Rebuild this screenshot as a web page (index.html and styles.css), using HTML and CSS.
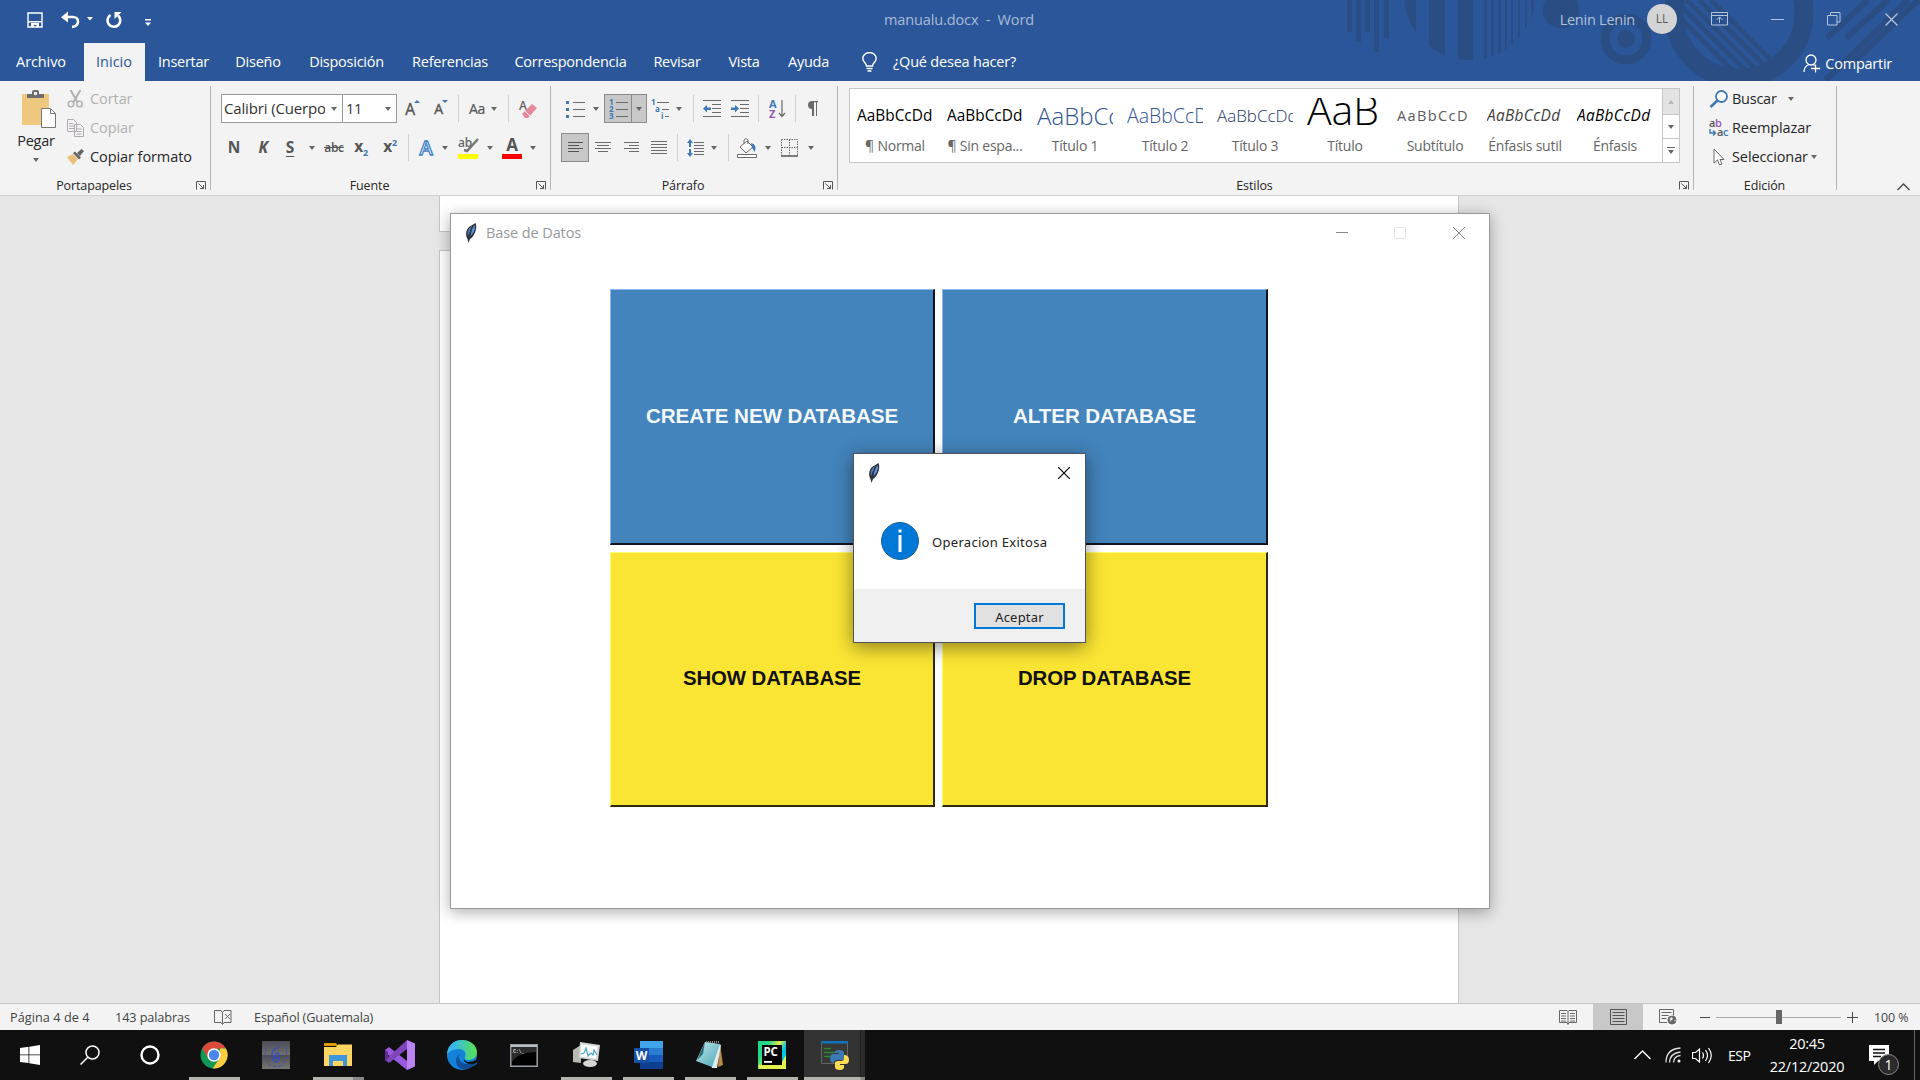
FILE: index.html
```html
<!DOCTYPE html>
<html lang="es">
<head>
<meta charset="utf-8">
<title>manualu.docx - Word</title>
<link rel="stylesheet" href="styles.css">
</head>
<body>
<div class="screen">
  <header class="top">
    <svg class="pattern" width="580" height="81" viewBox="1340 0 580 81" fill="#2a4e84">
      <defs>
        <clipPath id="disc"><circle cx="1470" cy="-6" r="66"/></clipPath>
        <clipPath id="hole"><circle cx="1739" cy="6" r="65"/></clipPath>
      </defs>
      <path d="M1347 0h5v32h-5zM1356 0h5v42h-5zM1365 0h5v32h-5zM1374 0h5v52h-5zM1384 0h5v38h-5z"/>
      <path clip-path="url(#disc)" d="M1400 0h16v70h-16zM1429 0h16v70h-16zM1458 0h15v70h-15zM1484 0h3v70h-3zM1491 0h3v70h-3zM1498 0h3v70h-3zM1505 0h2v70h-2zM1511 0h2v70h-2zM1518 0h2v70h-2zM1525 0h2v70h-2zM1531 0h3v70h-3z"/>
      <circle cx="1561" cy="10" r="18"/>
      <circle cx="1626" cy="39" r="21" fill="none" stroke="#2a4e84" stroke-width="9"/>
      <circle cx="1626" cy="39" r="9"/>
      <circle cx="1739" cy="13" r="65" fill="none" stroke="#2a4e84" stroke-width="19"/>
      <g clip-path="url(#hole)" stroke="#2a4e84" stroke-width="5">
        <path d="M1662 0l80 80M1675 0l80 80M1687 0l80 80M1699 0l80 80M1711 0l80 80" />
      </g>
      <path d="M1827 38L1868 0M1846 38L1888 0M1826 80L1908 0M1852 64L1918 0" stroke="#2a4e84" stroke-width="6"/>
    </svg>
    <div class="titlebar">
      <div class="quick">
        <svg width="16" height="16" viewBox="0 0 16 16"><path d="M1 1h14v14H1z" fill="none" stroke="#fff" stroke-width="1.400"/><path d="M1 9h14v1.500H1z" fill="#fff"/><path d="M4 11h8v4h-2.500v-2H7v2H4z" fill="#fff"/></svg>
        <svg width="20" height="18" viewBox="0 0 20 18"><path d="M3 6h9c3 0 5 2 5 4.500S15 15.500 11 16" fill="none" stroke="#fff" stroke-width="2.600"/><path d="M0 6.200L7 .5v11z" fill="#fff"/></svg>
        <svg class="dd" width="6" height="4" viewBox="0 0 6 4"><path d="M0 0h6L3 3.500z" fill="#fff"/></svg>
        <svg width="18" height="17" viewBox="0 0 18 17"><path d="M5.500 3A6.400 6.400 0 1 0 13 3.500" fill="none" stroke="#fff" stroke-width="2.600"/><path d="M9.500 0h7l-7 7z" fill="#fff"/></svg>
        <svg width="6" height="8" viewBox="0 0 6 8"><path d="M0 0h6v1.500H0zM0 3.500h6L3 7z" fill="#fff"/></svg>
      </div>
      <div class="doc-title">manualu.docx&nbsp; -&nbsp; Word</div>
      <div class="account">
        <span class="user">Lenin Lenin</span>
        <span class="avatar">LL</span>
        <svg width="17" height="14" viewBox="0 0 17 14" fill="none" stroke="#b3c4dd"><path d="M.5.5h16v12.500H.5zM.5 3.500h16M8.500 11V5.500M5.500 8l3-3 3 3"/></svg>
        <svg width="13" height="13" viewBox="0 0 13 13" stroke="#b3c4dd"><path d="M0 6.500h13"/></svg>
        <svg width="14" height="14" viewBox="0 0 14 14" fill="none" stroke="#b3c4dd"><path d="M.5 3.500h9.500v9.500H.5zM3.500 3V.5h9.500v9.500h-3"/></svg>
        <svg width="13" height="13" viewBox="0 0 13 13" stroke="#b3c4dd" stroke-width="1.300"><path d="M.5.5l12 12M12.500.5l-12 12"/></svg>
      </div>
    </div>
    <nav class="tabs">
      <span>Archivo</span><span class="active">Inicio</span><span>Insertar</span><span>Diseño</span><span>Disposición</span><span>Referencias</span><span>Correspondencia</span><span>Revisar</span><span>Vista</span><span>Ayuda</span>
      <svg class="bulb" width="15" height="20" viewBox="0 0 15 20" fill="none" stroke="#fff" stroke-width="1.400"><path d="M4.500 14c0-3-3.700-4-3.700-7.500a6.700 6 0 0 1 13.400 0C14.200 10 10.500 11 10.500 14zM4.500 16.500h6M5.500 19h4"/></svg>
      <span class="tell">¿Qué desea hacer?</span>
      <span class="share"><svg width="18" height="19" viewBox="0 0 18 19" fill="none" stroke="#fff" stroke-width="1.300"><circle cx="8" cy="6" r="5"/><path d="M1 18c0-4 2-6.500 5-7.500M10 10.500l1.500 1M8 14.500h9M12.500 10.500v8"/></svg>Compartir</span>
    </nav>
  </header>

  <section class="ribbon">
    <div class="group clipboard">
      <div class="body">
        <div class="paste">
          <svg width="35" height="39" viewBox="0 0 35 39"><path d="M0 4h27v31H0z" fill="#edc87e"/><path d="M5 4h5V2q0-2 2-2h3q2 0 2 2v2h5v4H5z" fill="#6e6e6e"/><path d="M12 2h3v3h-3z" fill="#f3f3f3"/><path d="M19.500 18.500h9l5 5v14h-14z" fill="#fff" stroke="#777"/><path d="M28.500 18.500v5h5" fill="none" stroke="#777"/></svg>
          <span>Pegar</span>
          <i class="caret"></i>
        </div>
        <div class="clip-list">
          <div class="off"><svg width="16" height="18" viewBox="0 0 16 18" fill="none" stroke="#b1b1b1" stroke-width="1.500"><path d="M3 0l7 12M13 0L6 12" stroke-width="2"/><circle cx="3.500" cy="14" r="2.800"/><circle cx="12" cy="14" r="2.800"/></svg>Cortar</div>
          <div class="off"><svg width="17" height="18" viewBox="0 0 17 18" fill="#f3f3f3" stroke="#b1a9b1"><path d="M.5.500h6l3 3v9h-9zM2 4.500h4M2 7h5M2 9.500h5M7.500 5.500h6l3 3v9h-9zM9.500 10h5M9.500 12.500h5M9.500 15h5"/></svg>Copiar</div>
          <div><svg width="17" height="16" viewBox="0 0 17 16"><path d="M0 8l6-3 5 5-5 6z" fill="#e9c07a"/><path d="M6 4l2-1.500 6 6-2 2zM10 4l4.500-4L17 2l-4 5z" fill="#666"/></svg>Copiar formato</div>
        </div>
      </div>
      <div class="foot"><span>Portapapeles</span><svg class="launch" width="10" height="9" viewBox="0 0 10 9"><path d="M.5 8.500v-8h9v8M2.500 2.500l5 5M7.500 4v3.500H4" fill="none" stroke="#555"/></svg></div>
    </div>

    <div class="group font">
      <div class="body">
        <div class="frow1">
          <div class="combo name"><span>Calibri (Cuerpo)</span><i class="caret"></i></div>
          <div class="combo size"><span>11</span><i class="caret"></i></div>
          <span class="grow">A<svg width="6" height="3" viewBox="0 0 6 3"><path d="M0 3h6L3 0z" fill="#3e78b5"/></svg></span>
          <span class="grow small">A<svg width="6" height="3" viewBox="0 0 6 3"><path d="M0 0h6L3 3z" fill="#3e78b5"/></svg></span>
          <i class="sep"></i>
          <span class="case">Aa <i class="caret"></i></span>
          <i class="sep"></i>
          <svg width="19" height="20" viewBox="0 0 19 20"><text x="0" y="11" class="svg-a">A</text><path d="M3 15l10-10 5 4-9 10H6z" fill="#e5899b"/><path d="M6 12l5 5" stroke="#f3f3f3"/></svg>
        </div>
        <div class="frow2">
          <b>N</b><b class="it">K</b><b class="un">S</b><i class="caret"></i><s>abc</s><b class="sub">x<small>2</small></b><b class="sup">x<small>2</small></b><i class="sep"></i>
          <svg width="18" height="20" viewBox="0 0 18 20"><text x="9" y="17" text-anchor="middle" class="svg-fx">A</text></svg><i class="caret"></i>
          <svg width="21" height="22" viewBox="0 0 21 22"><text x="0" y="10" class="svg-ab">ab</text><path d="M20 2L9 14l-3-1" fill="none" stroke="#777" stroke-width="2.500"/><path d="M0 17h20v5H0z" fill="#ff0"/></svg><i class="caret"></i>
          <svg width="20" height="22" viewBox="0 0 20 22"><text x="10" y="14" text-anchor="middle" class="svg-fc">A</text><path d="M0 17h20v5H0z" fill="red"/></svg><i class="caret"></i>
        </div>
      </div>
      <div class="foot"><span>Fuente</span><svg class="launch" width="10" height="9" viewBox="0 0 10 9"><path d="M.5 8.500v-8h9v8M2.500 2.500l5 5M7.500 4v3.500H4" fill="none" stroke="#555"/></svg></div>
    </div>

    <div class="group para">
      <div class="body">
        <div class="prow1">
          <svg width="19" height="18" viewBox="0 0 19 18"><path d="M0 1h3v3H0zM0 8h3v3H0zM0 15h3v3H0z" fill="#3e78b5"/><path d="M7 2.500h12M7 9.500h12M7 16.500h12" stroke="#6a6a6a"/></svg><i class="caret"></i>
          <span class="numbered"><svg width="19" height="20" viewBox="0 0 19 20"><text y="6" class="svg-n">1</text><text y="13" class="svg-n">2</text><text y="20" class="svg-n">3</text><path d="M7 3.500h12M7 10.500h12M7 17.500h12" stroke="#6a6a6a"/></svg><span class="drop"><i class="caret"></i></span></span>
          <svg width="19" height="20" viewBox="0 0 19 20"><text y="6" class="svg-n">1</text><text x="4" y="13" class="svg-n">a</text><text x="10" y="20" class="svg-n">i</text><path d="M6 3.500h12M11 10.500h7M14 17.500h4" stroke="#6a6a6a"/></svg><i class="caret"></i>
          <i class="sep"></i>
          <svg width="18" height="17" viewBox="0 0 18 17"><path d="M0 .5h18M9 4.500h9M9 8.500h9M9 12.500h9M0 16.500h18" stroke="#6a6a6a"/><path d="M0 8.500L4 5v2.500h4v2.500H4v2.500z" fill="#3e78b5"/></svg>
          <svg width="18" height="17" viewBox="0 0 18 17"><path d="M0 .5h18M9 4.500h9M9 8.500h9M9 12.500h9M0 16.500h18" stroke="#6a6a6a"/><path d="M8 8.500L4 5v2.500H0v2.500h4v2.500z" fill="#3e78b5"/></svg>
          <i class="sep"></i>
          <svg width="17" height="20" viewBox="0 0 17 20"><text x="0" y="9" class="svg-az blue-a">A</text><text x="0" y="19" class="svg-az purple-z">Z</text><path d="M13 1v16M10 14l3 3.500 3-3.500" fill="none" stroke="#6a6a6a" stroke-width="1.200"/></svg>
          <i class="sep"></i>
          <svg width="11" height="15" viewBox="0 0 11 15"><path d="M5 8a4 4 0 0 1 0-8h6v1.200H10V15H9V1.200H7V15H5z" fill="#6a6a6a"/></svg>
        </div>
        <div class="prow2">
          <span class="pressed"><svg width="15" height="12" viewBox="0 0 15 12"><path d="M0 .5h15M0 3.500h11M0 6.500h15M0 9.500h11" stroke="#555"/></svg></span>
          <svg width="16" height="12" viewBox="0 0 16 12"><path d="M0 .5h16M2 3.500h12M0 6.500h16M3 9.500h10" stroke="#6a6a6a"/></svg>
          <svg width="15" height="12" viewBox="0 0 15 12"><path d="M0 .5h15M5 3.500h10M0 6.500h15M5 9.500h10" stroke="#6a6a6a"/></svg>
          <svg width="16" height="13" viewBox="0 0 16 13"><path d="M0 .5h16M0 3.500h16M0 6.500h16M0 9.500h16M0 12.500h16" stroke="#6a6a6a"/></svg>
          <i class="sep"></i>
          <svg width="17" height="18" viewBox="0 0 17 18"><path d="M3 0l3 4H4v4H2V4H0zM3 18l3-4H4v-4H2v4H0z" fill="#3e78b5"/><path d="M7 3.500h10M7 6.500h10M7 9.500h10M7 12.500h10M7 15.500h10" stroke="#6a6a6a"/></svg><i class="caret"></i>
          <i class="sep"></i>
          <svg width="20" height="20" viewBox="0 0 20 20"><path d="M3 9l7-6 6 6-7 6zM7 6V2q2-3 4 0v4" fill="#fff" stroke="#6a6a6a"/><path d="M14 5q6 1 4 9l-3-4z" fill="#3e78b5"/><path d="M.5 16.500h19v3H.5z" fill="#fff" stroke="#6a6a6a"/></svg><i class="caret"></i>
          <svg width="17" height="18" viewBox="0 0 17 18"><path d="M.5.5h16v16M.5.5v16M8.500.5v16M.5 8.500h16" fill="none" stroke="#6a6a6a" stroke-dasharray="1.500 1"/><path d="M0 17h17" stroke="#555" stroke-width="1.500"/></svg><i class="caret"></i>
        </div>
      </div>
      <div class="foot"><span>Párrafo</span><svg class="launch" width="10" height="9" viewBox="0 0 10 9"><path d="M.5 8.500v-8h9v8M2.500 2.500l5 5M7.500 4v3.500H4" fill="none" stroke="#555"/></svg></div>
    </div>

    <div class="group styles">
      <div class="body">
        <div class="gallery">
          <div class="style"><p class="s-normal">AaBbCcDd</p><span>¶ Normal</span></div>
          <div class="style"><p class="s-normal">AaBbCcDd</p><span>¶ Sin espa...</span></div>
          <div class="style"><p class="s-t1">AaBbCc</p><span>Título 1</span></div>
          <div class="style"><p class="s-t2">AaBbCcD</p><span>Título 2</span></div>
          <div class="style"><p class="s-t3">AaBbCcDd</p><span>Título 3</span></div>
          <div class="style"><p class="s-title">AaB</p><span>Título</span></div>
          <div class="style"><p class="s-sub">AaBbCcD</p><span>Subtítulo</span></div>
          <div class="style"><p class="s-em soft">AaBbCcDd</p><span>Énfasis sutil</span></div>
          <div class="style"><p class="s-em">AaBbCcDd</p><span>Énfasis</span></div>
          <div class="scroller"><span class="dim"><i class="caret up"></i></span><span><i class="caret"></i></span><span><i class="more"></i><i class="caret"></i></span></div>
        </div>
      </div>
      <div class="foot"><span>Estilos</span><svg class="launch" width="10" height="9" viewBox="0 0 10 9"><path d="M.5 8.500v-8h9v8M2.500 2.500l5 5M7.500 4v3.500H4" fill="none" stroke="#555"/></svg></div>
    </div>

    <div class="group edit">
      <div class="body">
        <div class="erow"><svg width="19" height="18" viewBox="0 0 19 18"><circle cx="12" cy="6.500" r="5.500" fill="#fff" stroke="#3e78b5" stroke-width="1.800"/><path d="M8 10.500l-7 6.500" stroke="#3e78b5" stroke-width="2.600"/></svg><span class="find">Buscar</span><i class="caret"></i></div>
        <div class="erow"><svg width="20" height="18" viewBox="0 0 20 18"><text x="0" y="8" class="svg-r">a<tspan fill="#9357b3">b</tspan></text><text x="8" y="17" class="svg-r">a<tspan fill="#3e78b5">c</tspan></text><path d="M1 10v4h5M4 11.500L6.500 14 4 16.500" fill="none" stroke="#3e78b5" stroke-width="1.400"/></svg><span class="replace">Reemplazar</span></div>
        <div class="erow"><svg width="19" height="18" viewBox="0 0 19 18"><path d="M4.500 1v14l3.500-3 2 5 2.500-1-2-4.500h4z" fill="#fff" stroke="#6a6a6a"/></svg><span class="replace">Seleccionar</span><i class="caret"></i></div>
      </div>
      <div class="foot"><span>Edición</span></div>
    </div>
    <svg class="collapse" width="13" height="8" viewBox="0 0 13 8"><path d="M.5 7l6-6 6 6" fill="none" stroke="#444" stroke-width="1.300"/></svg>
  </section>

  <main class="canvas">
    <div class="page first"></div>
    <div class="page second"></div>

    <section class="tk">
      <div class="tk-bar">
        <svg width="12" height="20" viewBox="0 0 12 20"><path d="M10.500 0C13 5 9 14 5 16L3.500 20 2.500 16C0 12 1 7 4 4z" fill="#2d3440"/><path d="M9.500 2C11 6 8 11 5.500 13 6 9 7 6 9.500 2z" fill="#5d96dc"/><path d="M7 3C3 6 2 9 3 13z" fill="#557baa"/></svg>
        <span>Base de Datos</span>
        <svg width="12" height="12" viewBox="0 0 12 12" stroke="#888"><path d="M0 5.500h12"/></svg>
        <svg width="12" height="12" viewBox="0 0 12 12" stroke="#e6e6e6" fill="none"><path d="M.5.5h11v11H.5z"/></svg>
        <svg width="12" height="12" viewBox="0 0 12 12" stroke="#888"><path d="M0 0l12 12M12 0L0 12"/></svg>
      </div>
      <div class="tiles">
        <div class="tile blue">CREATE NEW DATABASE</div>
        <div class="tile blue">ALTER DATABASE</div>
        <div class="tile yellow">SHOW DATABASE</div>
        <div class="tile yellow">DROP DATABASE</div>
      </div>
    </section>

    <section class="dialog">
      <div class="dialog-bar">
        <svg width="12" height="20" viewBox="0 0 12 20"><path d="M10.500 0C13 5 9 14 5 16L3.500 20 2.500 16C0 12 1 7 4 4z" fill="#2d3440"/><path d="M9.500 2C11 6 8 11 5.500 13 6 9 7 6 9.500 2z" fill="#5d96dc"/><path d="M7 3C3 6 2 9 3 13z" fill="#557baa"/></svg>
        <svg width="12" height="12" viewBox="0 0 12 12" stroke="#000" stroke-width="1.200"><path d="M0 0l12 12M12 0L0 12"/></svg>
      </div>
      <div class="message">
        <svg width="38" height="38" viewBox="0 0 38 38"><circle cx="19" cy="19" r="18.500" fill="#0078d7" stroke="#1a62a3"/><path d="M17.500 13h3v17h-3zM17.500 7.500h3v3h-3z" fill="#fff"/></svg>
        <span>Operacion Exitosa</span>
      </div>
      <div class="actions"><button>Aceptar</button></div>
    </section>
  </main>

  <footer class="status">
    <span class="st-page">Página 4 de 4</span><span class="st-words">143 palabras</span>
    <svg class="st-proof" width="18" height="15" viewBox="0 0 18 15" fill="none" stroke="#666"><path d="M8.500 2.500V14M8.500 2.500L7 .5H.5v12H7l1.500 2 1.500-2h7V.5H10zM11 4l5 5M16 4l-5 5"/></svg>
    <span class="st-lang">Español (Guatemala)</span>
    <div class="views">
      <span class="read"><svg width="18" height="15" viewBox="0 0 18 15" fill="none" stroke="#666"><path d="M.5.5H8l1 1 1-1h7.500v12H10l-1 2-1-2H.5zM9 1v13M2 3.500h5M2 6h5M2 8.500h5M11 3.500h5M11 6h5M11 8.500h5M2 11h5M11 11h5"/></svg></span>
      <span class="print"><svg width="17" height="16" viewBox="0 0 17 16" fill="none" stroke="#555"><path d="M.5.500h16v15H.5zM2.500 3.500h12M2.500 6.500h12M2.500 9.500h12M2.500 12.500h12"/></svg></span>
      <span class="web"><svg width="18" height="16" viewBox="0 0 18 16" fill="none" stroke="#666"><path d="M8 13.500H.5V.5h14v6M2.500 3.500h10M2.500 6.500h7M2.500 9.500h5"/><circle cx="13" cy="11" r="4" fill="#666"/><path d="M10.500 9.500l2.500-1.500 1 2-2 1.500v2zM15 11.500l1.500-1v2z" fill="#eee" stroke="none"/></svg></span>
    </div>
    <div class="zoom"><i class="minus"></i><span class="track"><i></i></span><svg width="11" height="11" viewBox="0 0 11 11" stroke="#444"><path d="M0 5.500h11M5.500 0v11"/></svg><span class="pct">100 %</span></div>
  </footer>

  <footer class="taskbar">
    <div class="app start"><svg width="20" height="20" viewBox="0 0 20 20" fill="#fff"><path d="M0 3l8.500-1.200v7.700H0zM9.300 1.700L20 0v9.500H9.300zM0 10.300h8.500V18L0 17zM9.300 10.300H20V20L9.300 18.200z"/></svg></div>
    <div class="app find-app"><svg width="20" height="20" viewBox="0 0 20 20" fill="none" stroke="#fff" stroke-width="1.500"><circle cx="12.500" cy="7.500" r="6.500"/><path d="M8 12l-7.500 7.500"/></svg></div>
    <div class="app cortana"><svg width="20" height="20" viewBox="0 0 20 20"><circle cx="10" cy="10" r="8.500" fill="none" stroke="#fff" stroke-width="2.400"/></svg></div>
    <div class="app open"><svg width="28" height="28" viewBox="0 0 28 28"><circle cx="14" cy="14" r="13.500" fill="#119a57"/><path d="M2.300 7.300A13.500 13.500 0 0 1 25.700 7.300L14 8l-6 9z" fill="#dc4a3c"/><path d="M25.900 7.500A13.500 13.500 0 0 1 12.500 27.400L20 17V7.500z" fill="#fdcb3e"/><circle cx="14" cy="14" r="6.700" fill="#fff"/><circle cx="14" cy="14" r="5.200" fill="#4a86f0"/></svg></div>
    <div class="app"><svg width="28" height="28" viewBox="0 0 28 28"><defs><linearGradient id="bug" x2="0" y2="1"><stop offset="0" stop-color="#4c4c4e"/><stop offset=".48" stop-color="#6e6e6e"/><stop offset=".52" stop-color="#4c4c4e"/><stop offset="1" stop-color="#777"/></linearGradient></defs><path d="M0 0h28v28H0z" fill="url(#bug)"/><path d="M17 6c-8 3-8 8-6 13 3 4 7 1 6-5-1-3-3-2-4 0-1 3 1 5 2 2" fill="none" stroke="#3048e0" stroke-width="1.200"/><path d="M4 7q6-8 10-3 5-5 10 3l1 8-4 9q-7 3-14 0l-4-9z" fill="none" stroke="#3f4bb0" stroke-width=".8" stroke-dasharray="4 1.500"/></svg></div>
    <div class="app open stacked"><svg width="28" height="24" viewBox="0 0 28 24"><path d="M0 0h12l2 3H0z" fill="#dd9b00"/><path d="M0 4h12l2-2.500h14V23H0z" fill="#ffd662"/><path d="M5 12h18v11h-4v-5H9v5H5z" fill="#3e97da"/></svg></div>
    <div class="app"><svg width="30" height="30" viewBox="0 0 30 30"><path d="M0 10l4-3 18 14v9L2 14z" fill="#9a5ae0"/><path d="M0 20L22 0v9L4 23z" fill="#7e45bd"/><path d="M0 10l3 2v7l-3 2z" fill="#5f2d96"/><path d="M22 0l8 3.500v23L22 30z" fill="#ba83f5"/></svg></div>
    <div class="app"><svg width="30" height="30" viewBox="0 0 30 30"><defs><linearGradient id="edge"><stop offset=".2" stop-color="#35b8ee"/><stop offset=".9" stop-color="#55dd62"/></linearGradient></defs><circle cx="15" cy="15" r="15" fill="#1382d8"/><path d="M0 14C1 4 8 0 15 0c9 0 15 6 15 12 0 6-5 8-9 8-2 0-4-1-3-3C20 13 17 9 12 9 6 9 2 12 0 14z" fill="url(#edge)"/><path d="M10 17c0 7 7 10 16 8-6 8-17 4-17-4 0-3 1-5 4-7q-2 2-1 5 2 5 9 5 5 0 7-3l2 0v3q-3 3-8 3-11-1-12-10" fill="#114e97"/><path d="M17 17q-1 4 4 5 4 0 8-2l1-2v4l-3 2q-6 1-10-3z" fill="#101010"/></svg></div>
    <div class="app"><svg width="28" height="23" viewBox="0 0 28 23"><path d="M.8.800h26.400v21.400H.8z" fill="#000" stroke="#9a9fa6" stroke-width="1.500"/><path d="M1 1h26v2H1z" fill="#b8bec4"/><path d="M2 3h24v5C14 9 7 10 2 18z" fill="#2b2b2b"/><text x="3" y="8.500" class="svg-cmd">C:\_</text></svg></div>
    <div class="app open"><svg width="28" height="26" viewBox="0 0 28 26"><path d="M1 8l8-5v18l-8-1z" fill="#b9b9b4"/><path d="M8 0l20 3-2 16L7 16z" fill="#d4d6d4"/><path d="M9.500 2.500l16 2-1.500 12-15.500-2z" fill="#fff"/><path d="M9 12l3-1 2-5 2 8 3-3 2 2 1-5 3 5" fill="none" stroke="#49a6cd" stroke-width="1.200"/><ellipse cx="18" cy="21.500" rx="7" ry="3.500" fill="#d7d7d4"/></svg></div>
    <div class="app open"><svg width="29" height="28" viewBox="0 0 29 28"><path d="M6 0h23v7H6z" fill="#41a5ee"/><path d="M6 7h23v7H6z" fill="#2b7cd3"/><path d="M6 14h23v7H6z" fill="#185abd"/><path d="M6 21h23v7H6z" fill="#103f91"/><path d="M0 7h15v15H0z" fill="#1650a9"/><text x="7.500" y="18.500" text-anchor="middle" class="svg-w">W</text></svg></div>
    <div class="app open"><svg width="28" height="28" viewBox="0 0 28 28"><defs><linearGradient id="note" x2="1" y2="1"><stop offset="0" stop-color="#c0e8ee"/><stop offset="1" stop-color="#4aa5b5"/></linearGradient></defs><path d="M24 2l3 22-5 2z" fill="#b88a44"/><path d="M10 1l15 3-4 23-5 0z" fill="#dce9ed"/><path d="M9 1l15 2-8 23L0 20z" fill="url(#note)"/><path d="M9 1l-3 7-5 11 6-6z" fill="#276d78"/><path d="M10 1h14" stroke="#888" stroke-width="2" stroke-dasharray="1 1"/></svg></div>
    <div class="app open"><svg width="28" height="28" viewBox="0 0 28 28"><defs><linearGradient id="pc" x2="1" y2=".6"><stop offset=".3" stop-color="#21d789"/><stop offset=".6" stop-color="#e5ee4a"/><stop offset=".8" stop-color="#07c3e8"/></linearGradient></defs><path d="M0 0h28v28H0z" fill="url(#pc)"/><path d="M20 28l8-14v14zM0 24h28v4H2z" fill="#e4f04c"/><path d="M4 4h20v20H4z" fill="#050505"/><text x="5.500" y="15" class="svg-pc">PC</text><path d="M6 20h8v1.800H6z" fill="#fff"/></svg></div>
    <div class="app current"><svg width="29" height="29" viewBox="0 0 29 29"><path d="M.5.500h26v22H.5z" fill="#383838" stroke="#666"/><path d="M0 0h27v2.500H0z" fill="#0f73bd"/><path d="M3 7.500h7M3 11.500h11M3 15.500h7" stroke="#278a2e" stroke-width="1.300"/><path d="M14 11q0-2 4-2 5 0 5 3v5q0 2-3 2h-4q-3 0-3 3-4 0-4-5 0-4 4-4h5v-1h-4z" fill="#3a79b3"/><path d="M23 14q5 0 5 5 0 4-4 4h-5v1h4v2q0 3-4 3-5 0-5-3v-4q0-2 3-2h3q3 0 3-3z" fill="#ffdc53"/></svg></div>
    <div class="tray">
      <svg width="17" height="10" viewBox="0 0 17 10" fill="none" stroke="#fff" stroke-width="1.400"><path d="M.5 9l8-8 8 8"/></svg>
      <svg width="16" height="16" viewBox="0 0 16 16" fill="none" stroke="#ddd" stroke-width="1.300"><path d="M1 15.500Q1 2 15.500 1M4.500 15.500Q5 6 15.500 5M8.500 15.500Q9 9 15.500 8.500"/><circle cx="14" cy="14" r="1.500" fill="#fff" stroke="none"/></svg>
      <svg width="20" height="17" viewBox="0 0 20 17" fill="none" stroke="#fff" stroke-width="1.200"><path d="M.6 5.500h3L7.500 2v13l-4-3.500h-3zM10.500 5.500q2 3 0 6M13.500 3q4 5.500 0 11M16.500 1q5.500 7.500 0 15"/></svg>
      <span class="lang">ESP</span>
      <div class="clock"><span>20:45</span><span>22/12/2020</span></div>
      <div class="notice"><svg width="20" height="20" viewBox="0 0 20 20"><path d="M0 0h20v16H9l-4 4v-4H0z" fill="#fff"/><path d="M4 4.500h12M4 8h12M4 11.500h8" stroke="#111" stroke-width="1.300"/></svg><b>1</b></div>
    </div>
  </footer>
</div>
</body>
</html>
```
FILE: styles.css
```css
* { box-sizing: border-box; }
body { margin: 0; background: #e6e6e6; font-family: "Open Sans", "Noto Sans", sans-serif; font-size: 14.5px; letter-spacing: -0.25px; color: #262626; overflow: hidden; }
svg { display: block; flex: none; }
p { margin: 0; }
.screen { width: 1920px; height: 1080px; display: grid; grid-template-rows: 81px 115px 808px 26px 50px; white-space: nowrap; overflow: hidden; }

/* Title bar and tabs */
.top { position: relative; background: #2b579a; color: #fff; }
.pattern { position: absolute; right: 0; top: 0; }
.titlebar { position: relative; display: grid; grid-template-columns: 400px 1fr 400px; height: 43px; }
.quick { display: flex; align-items: center; padding: 0 0 3px 27px; }
.quick svg:nth-child(2) { margin-left: 18px; }
.quick .dd { margin: 0 0 3px 6px; }
.quick svg:nth-child(4) { margin-left: 12px; }
.quick svg:nth-child(5) { margin: 5px 0 0 22px; }
.doc-title { text-align: center; line-height: 39px; color: #a9bbd8; padding-right: 2px; letter-spacing: -0.12px; }
.account { display: flex; align-items: center; padding: 0 22px 5px 0; justify-content: flex-end; }
.user { color: #b0c1dc; letter-spacing: -0.25px; }
.avatar { width: 30px; height: 30px; border-radius: 50%; background: #d4d4d4; color: #5f5a5a; font-size: 12px; line-height: 30px; text-align: center; margin: 0 34px 0 12px; letter-spacing: 0; }
.account svg + svg { margin-left: 43px; }
.account svg:last-child { margin-left: 44px; }
.tabs { position: relative; display: grid; height: 38px; grid-template-columns: 84px 61px 77px 72px 105px 102px 139px 74px 60px 69px 50px 150px 1fr; align-items: stretch; line-height: 37px; text-align: center; }
.tabs > span:first-child { padding-right: 2px; letter-spacing: -0.1px; }
.tabs .active { background: #f3f3f3; color: #2b579a; padding-right: 1px; letter-spacing: 0; }
.bulb { align-self: center; margin-left: 19px; }
.tabs .tell { text-align: left; letter-spacing: -0.2px; }
.tabs .share { display: flex; justify-content: flex-end; align-items: center; gap: 4px; padding: 3px 28px 0 0; line-height: 34px; }

/* Ribbon */
.ribbon { display: flex; background: #f3f3f3; border-bottom: 1px solid #cfcfcf; position: relative; }
.group { display: flex; flex-direction: column; height: 114px; padding-top: 5px; position: relative; }
.group::after { content: ""; position: absolute; right: 0; top: 5px; bottom: 5px; width: 1px; background: #b5b5b5; }
.clipboard { width: 211px; }
.font { width: 340px; }
.para { width: 287px; }
.styles { width: 856px; }
.edit { width: 143px; }
.body { height: 91px; }
.foot { display: flex; height: 17px; font-size: 12.5px; line-height: 17px; letter-spacing: -0.1px; }
.foot span { flex: 1; text-align: center; }
.launch { margin: 4px 5px 0 8px; }
.caret { display: inline-block; width: 0; height: 0; border: 3px solid transparent; border-top: 4px solid #666; border-bottom: 0; }
.sep { width: 1px; height: 27px; background: #d0d0d0; }
.off { color: #b1b1b1; }

.clipboard .body { display: flex; }
.paste { width: 60px; display: flex; flex-direction: column; align-items: center; padding: 4px 0 0 12px; }
.paste svg { margin-left: 6px; }
.paste span { line-height: 20px; margin-top: 2px; }
.paste .caret { margin-top: 7px; }
.clip-list { padding: 0 0 0 7px; letter-spacing: -0.08px; }
.clip-list div { display: flex; align-items: center; gap: 6px; height: 29px; line-height: 29px; position: relative; top: -2px; }
.clip-list svg { width: 17px; }

.font .body { padding: 8px 0 0 10px; }
.frow1, .frow2, .prow1, .prow2 { display: grid; height: 29px; align-items: center; justify-items: center; color: #555; }
.frow1 { grid-template-columns: 122px 54px 31px 26px 8px 42px 9px 31px; }
.frow2 { grid-template-columns: 26px 32px 22px 22px 22px 32px 26px 10px 26px 12px 34px 10px 33px 10px; margin-top: 10px; }
.combo { display: flex; align-items: center; width: 100%; height: 29px; border: 1px solid #999; background: #fff; color: #333; padding: 0 4px 0 2px; line-height: 27px; }
.combo span { flex: 1; overflow: hidden; }
.combo.name { font-size: 15px; letter-spacing: -0.15px; }
.combo .caret { margin: 0 1px 0 6px; }
.combo.size { border-left: 0; padding-left: 3px; }
.grow { display: flex; font-size: 15.5px; -webkit-text-stroke: .4px; line-height: 26px; }
.grow svg { margin: 4px 0 0 -1px; }
.grow.small { font-size: 14px; }
.case { display: flex; align-items: center; gap: 6px; font-size: 14px; -webkit-text-stroke: .2px; }
.svg-a { font: 600 12px "Open Sans", sans-serif; fill: #666; }
.svg-fx { font: 600 20px "Open Sans", sans-serif; fill: #fff; stroke: #4284c4; stroke-width: 1.3px; }
.svg-ab { font: 600 12px "Open Sans", sans-serif; fill: #666; }
.svg-fc { font: 700 17px "Open Sans", sans-serif; fill: #555; }
.svg-n { font: 700 8px "Open Sans", sans-serif; fill: #3e78b5; }
.svg-az { font: 700 11px "Open Sans", sans-serif; }
.blue-a { fill: #3e78b5; }
.purple-z { fill: #9357b3; }
.svg-r { font: 600 11px "Open Sans", sans-serif; fill: #555; letter-spacing: -0.3px; }
.svg-cmd { font: 700 5px "Liberation Mono", monospace; fill: #ddd; }
.svg-w { font: 700 12px "Open Sans", sans-serif; fill: #fff; }
.svg-pc { font: 700 11.5px "Open Sans", sans-serif; fill: #fff; }
.frow2 b { font-size: 15.5px; line-height: 24px; padding-bottom: 1px; }
.frow2 .it { font-style: italic; }
.frow2 .un { text-decoration: underline; text-underline-offset: 3px; }
.frow2 s { font-size: 12px; font-weight: 600; }
.frow2 small { font-size: 9px; color: #3e78b5; }
.frow2 .sub small { position: relative; top: 4px; }
.frow2 .sup small { position: relative; top: -6px; }

.para .body { padding: 8px 0 0 10px; }
.prow1 { grid-template-columns: 28px 13px 47px 23px 14px 14px 24px 32px 4px 34px 2px 33px; }
.prow2 { grid-template-columns: 28px 28px 28px 28px 8px 28px 10px 18px 20px 22px 21px 22px; margin-top: 10px; }
.numbered { display: grid; grid-template-columns: 1fr 15px; width: 43px; height: 29px; background: #c8c8c8; border: 1px solid #8a8a8a; align-items: center; justify-items: center; }
.drop { border-left: 1px solid #8a8a8a; width: 100%; height: 100%; display: grid; place-items: center; }
.pressed { width: 28px; height: 29px; background: #c8c8c8; border: 1px solid #8a8a8a; display: grid; place-items: center; }

.styles .body { padding: 2px 0 0 11px; }
.gallery { display: grid; grid-template-columns: repeat(9, 90px) 1fr; width: 831px; height: 75px; border: 1px solid #c6c6c6; background: #fff; }
.style { display: flex; flex-direction: column; align-items: center; color: #666; font-size: 14px; }
.style p { width: 76px; height: 31px; margin-top: 9px; overflow: hidden; color: #000; line-height: 35px; font-size: 15.4px; letter-spacing: 0; }
.style span { line-height: 20px; margin-top: 7px; }
.style .s-t1 { font-size: 24px; font-weight: 300; color: #2f5496; }
.style .s-t2 { font-size: 19.5px; font-weight: 300; color: #2f5496; }
.style .s-t3 { font-size: 17px; font-weight: 300; color: #1f3763; }
.style .s-title { font-size: 41px; font-weight: 300; line-height: 22px; }
.style .s-sub { font-size: 14.5px; letter-spacing: 1.4px; color: #5a5a5a; }
.style .s-em { font-style: italic; letter-spacing: 0.35px; }
.style .soft { color: #404040; }
.scroller { display: grid; grid-template-rows: 25px 24px 24px; margin-left: 2px; border-left: 1px solid #c6c6c6; }
.scroller span { display: flex; flex-direction: column; gap: 2px; align-items: center; justify-content: center; }
.scroller span + span { border-top: 1px solid #c6c6c6; }
.scroller .dim { background: #e3e3e3; }
.scroller .up { transform: rotate(180deg); border-top-color: #b8b8b8; }
.more { width: 8px; height: 1px; background: #666; }

.edit .body { padding-left: 15px; }
.edit .foot { padding-right: 2px; }
.erow { display: flex; align-items: center; height: 29px; line-height: 29px; position: relative; top: -2px; }
.erow svg { width: 20px; margin-right: 3px; }
.erow .find { margin-right: 8px; }
.erow .replace { letter-spacing: -0.1px; }
.erow .caret { margin-left: 3px; }
.collapse { margin: 102px 0 0 60px; }

/* Document canvas with the two windows above it */
.canvas { position: relative; background: #e6e6e6; overflow: hidden; padding-left: 439px; border-bottom: 1px solid #c6c6c6; }
.page { width: 1020px; background: #fff; border: 1px solid #c6c6c6; }
.first { height: 36px; border-top: 0; }
.second { height: 780px; margin-top: 18px; }
.tk { position: absolute; left: 450px; top: 17px; width: 1040px; height: 696px; background: #fff; border: 1px solid #999; box-shadow: 0 3px 14px rgba(0,0,0,.33); }
.tk-bar { display: flex; align-items: center; height: 37px; padding: 0 24px 0 14px; }
.tk-bar span { flex: 1; color: #999; padding-left: 9px; letter-spacing: -0.1px; }
.tk-bar svg + svg { margin-left: 46px; }
.tk-bar svg:last-child { margin-left: 47px; }
.tiles { display: grid; grid-template-columns: 325px 326px; grid-template-rows: 256px 255px; gap: 7px; margin: 38px 0 0 159px; }
.tile { display: grid; place-items: center; padding-bottom: 1px; font: bold 20.6px "Liberation Sans", Arial, sans-serif; letter-spacing: -0.1px; border: 2px solid; border-top-width: 1px; border-left-width: 1px; }
.blue { background: #4384bc; color: #f4f8fc; border-color: #8db4f5 #10151d #10151d #8db4f5; }
.yellow { background: #fbe534; color: #111; border-color: #ffff74 #2e2a10 #2e2a10 #ffff74; font-size: 20.4px; }
.dialog { position: absolute; left: 853px; top: 257px; width: 233px; height: 190px; display: flex; flex-direction: column; background: #fff; border: 1px solid #4d5358; box-shadow: 0 4px 18px rgba(0,0,0,.45); font-family: "Noto Sans", sans-serif; color: #222; font-size: 13px; }
.dialog-bar { display: flex; justify-content: space-between; align-items: center; height: 37px; padding: 0 15px 0 14px; }
.message { flex: 1; display: flex; align-items: center; gap: 13px; padding: 1px 0 0 27px; letter-spacing: 0.3px; }
.message span { padding-top: 2px; }
.actions { height: 53px; background: #f0f0f0; display: flex; justify-content: flex-end; padding: 14px 20px 0 0; }
.actions button { width: 91px; height: 26px; padding: 1px 0 0; border: 2px solid #0078d7; background: #e1e1e1; font: 13px "Noto Sans", sans-serif; letter-spacing: 0.2px; color: #222; }

/* Status bar */
.status { display: flex; align-items: center; background: #f3f3f3; font-size: 12.7px; letter-spacing: -0.05px; color: #444; padding: 0 11px 0 10px; }
.st-page { width: 105px; letter-spacing: 0.05px; }
.st-words { width: 99px; letter-spacing: -0.1px; }
.st-lang { margin-left: 22px; flex: 1; letter-spacing: -0.15px; }
.views { display: flex; height: 100%; }
.views span { width: 50px; display: grid; place-items: center; }
.views .print { background: #c8c8c8; }
.zoom { display: flex; align-items: center; margin-left: 7px; }
.minus { width: 10px; height: 1px; background: #444; }
.track { width: 125px; height: 1px; margin: 0 6px; background: #aaa; display: flex; align-items: center; justify-content: center; }
.track i { flex: none; width: 6px; height: 14px; background: #666; }
.pct { width: 35px; margin-left: 16px; font-size: 12.4px; }

/* Taskbar */
.taskbar { display: flex; background: #101010; color: #fff; }
.app { width: 62px; display: grid; place-items: center; position: relative; }
.start { width: 60px; }
.find-app { width: 60px; }
.cortana { width: 63px; padding-right: 3px; }
.app.open::after { content: ""; position: absolute; left: 6px; bottom: 0; width: 51px; height: 3px; background: #b4b4ae; }
.app.stacked::after { background: linear-gradient(90deg, #b4b4ae 40px, #888 40px); }
.current { background: linear-gradient(90deg, #333 56px, #222 56px, #222 57px, #2c2c2c 57px); width: 61px; margin-left: 1px; padding-left: 1px; }
.current::after { content: ""; position: absolute; left: 0; bottom: 0; width: 61px; height: 3px; background: linear-gradient(90deg, #b4b4ae 56px, #888 57px); }
.tray { flex: 1; display: flex; justify-content: flex-end; align-items: center; padding-right: 5px; }
.tray > svg + svg { margin-left: 14px; }
.tray > svg:nth-child(3) { margin-left: 11px; }
.lang { font-size: 14px; width: 24px; margin-left: 16px; letter-spacing: -0.5px; }
.clock { display: flex; flex-direction: column; align-items: center; width: 80px; margin-left: 15px; font-size: 14.5px; line-height: 23px; letter-spacing: -0.25px; }
.notice { position: relative; width: 46px; margin-left: 22px; border-right: 1px solid #666; height: 50px; display: flex; align-items: center; }
.notice b { position: absolute; left: 9px; top: 24px; width: 21px; height: 21px; border-radius: 50%; border: 1px solid #888; background: #2b2b2b; font-weight: 400; font-size: 14px; line-height: 19px; text-align: center; }
```
